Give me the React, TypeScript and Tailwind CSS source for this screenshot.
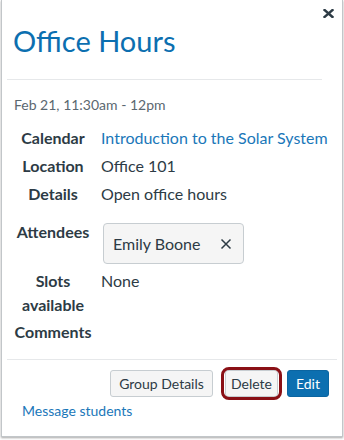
import React from 'react';

const rows = [
  { label: 'Calendar', value: 'Introduction to the Solar System', link: true },
  { label: 'Location', value: 'Office 101' },
  { label: 'Details', value: 'Open office hours' },
];

export default function App() {
  return (
    <div className="w-[344px] h-[440px] bg-white" style={{ fontFamily: 'Lato, "Open Sans", sans-serif' }}>
      <div className="relative ml-[1px] w-[342px] h-[437px] border-l border-r border-b border-[#c2c6c9] shadow-[0_1px_2px_rgba(0,0,0,0.35)] bg-white text-[#2d3b45]">
        <button className="absolute top-[9px] right-[8px] w-[11px] h-[9px] flex items-center justify-center">
          <svg width="11" height="9" viewBox="0 0 11 9">
            <path d="M1.5 1 L9.5 8 M9.5 1 L1.5 8" stroke="#2d3b45" strokeWidth="2.4" strokeLinecap="square" />
          </svg>
        </button>

        <h1 className="pt-[27px] pl-[11px] text-[29px] leading-[28px] text-[#0c6fb0]">Office Hours</h1>
        <div className="mt-[24px] ml-[5px] w-[315px] h-px bg-[#e6e8ea]" />

        <div className="mt-[15px] pl-[12px] text-[14px] leading-[20px] text-[#5b6770]">Feb 21, 11:30am - 12pm</div>

        <div className="mt-[11px] flex flex-col text-[16px] leading-[24px]">
          {rows.map((r, i) => (
            <div key={r.label} className={`flex ${i > 0 ? 'mt-[4px]' : ''}`}>
              <div className="ml-[6px] w-[90px] text-center font-bold">{r.label}</div>
              <div className={`ml-[3px] ${r.link ? 'text-[#1a77b9]' : ''}`}>{r.value}</div>
            </div>
          ))}

          <div className="flex mt-[14px]">
            <div className="ml-[6px] w-[90px] text-center font-bold">Attendees</div>
            <div className="ml-[5px] mt-[3px] h-[41px] w-[141px] flex items-center justify-between pl-[9px] pr-[11px] bg-[#f5f5f5] border border-[#c7cdd1] rounded-[4px]">
              <span>Emily Boone</span>
              <svg width="12" height="12" viewBox="0 0 12 12">
                <path d="M1.5 1.5 L10.5 10.5 M10.5 1.5 L1.5 10.5" stroke="#2d3b45" strokeWidth="1.5" />
              </svg>
            </div>
          </div>

          <div className="flex mt-[5px]">
            <div className="ml-[6px] w-[90px] text-center font-bold">Slots<br />available</div>
            <div className="ml-[3px]">None</div>
          </div>

          <div className="flex mt-[3px]">
            <div className="ml-[6px] w-[90px] text-center font-bold">Comments</div>
          </div>
        </div>

        <div className="mt-[15px] ml-[5px] w-[330px] h-px bg-[#e6e8ea]" />

        <div className="mt-[10px] flex items-center text-[14px]">
          <button className="ml-[108px] w-[103px] h-[27px] bg-[#f5f5f5] border border-[#c7cdd1] rounded-[3px] text-[#2d3b45]">Group Details</button>
          <div className="relative ml-[12px]">
            <button className="w-[53px] h-[27px] bg-[#f5f5f5] border border-[#c7cdd1] rounded-[3px] text-[#2d3b45]">Delete</button>
            <div className="absolute -inset-x-[4px] -inset-y-[3px] border-[3.5px] border-[#8a1016] rounded-[8px]" />
          </div>
          <button className="ml-[9px] w-[42px] h-[27px] bg-[#0c6fb0] border border-[#0b65a1] rounded-[3px] text-white">Edit</button>
        </div>

        <div className="mt-[4px] pl-[20px] text-[14px] leading-[20px] text-[#1a77b9]">Message students</div>
      </div>
    </div>
  );
}
